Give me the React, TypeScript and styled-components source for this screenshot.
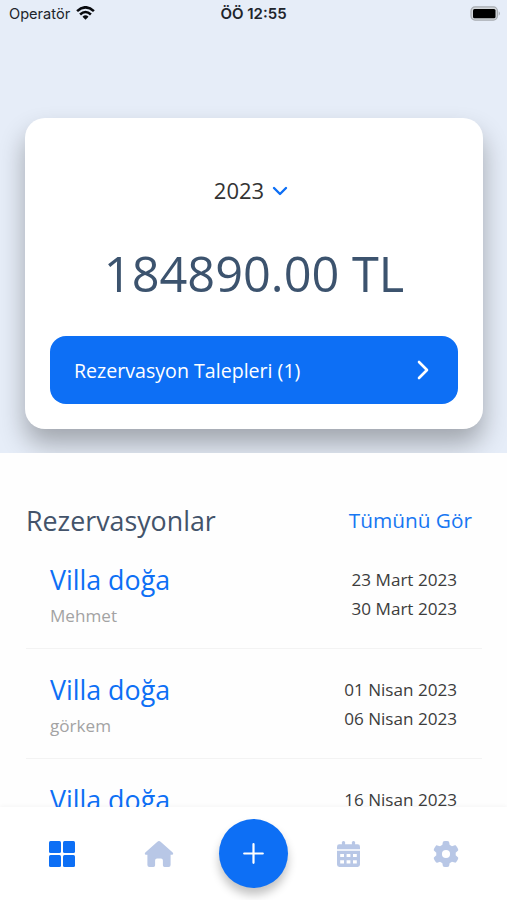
import React from "react";
import styled, { createGlobalStyle } from "styled-components";
import { FaGear } from "react-icons/fa6";

const BLUE = "#0d6ff5";

const GlobalStyle = createGlobalStyle`
  * { box-sizing: border-box; }
  body { margin: 0; background: #fff; }
`;

const Screen = styled.main`
  display: flex;
  flex-direction: column;
  width: 507px;
  height: 900px;
  overflow: hidden;
  background: #fefefe;
  font-family: "Open Sans", "Noto Sans", sans-serif;
`;

const Hero = styled.section`
  flex: none;
  height: 453px;
  overflow: hidden;
  background: #e6edf8;
`;

const StatusBar = styled.header`
  display: grid;
  grid-template-columns: 1fr auto 1fr;
  align-items: center;
  height: 28px;
  padding: 0 6px 0 9px;
  color: #20242b;
  font-family: Inter, sans-serif;
  font-size: 14.6px;
`;

const Carrier = styled.div`
  display: flex;
  align-items: center;
  gap: 6px;

  svg {
    margin-top: -2px;
  }
`;

const Clock = styled.div`
  margin: -1px 3px 0 0;
  font-weight: 600;
  font-size: 15px;
`;

const Battery = styled.svg`
  justify-self: end;
  margin-top: -2px;
`;

const Card = styled.div`
  display: flex;
  flex-direction: column;
  margin: 90px 24px 0 25px;
  height: 311px;
  padding: 53px 25px 25px;
  border-radius: 20px;
  background: #fff;
  box-shadow: 0 15px 26px rgba(0, 0, 0, 0.3);
`;

const YearPicker = styled.div`
  display: flex;
  align-items: center;
  justify-content: center;
  gap: 8px;
  height: 38px;
  padding-right: 6px;
  color: #333;
  font-size: 22px;

  svg {
    margin-top: 1px;
  }
`;

const Amount = styled.div`
  height: 78px;
  margin: 25px 0 auto;
  line-height: 78px;
  text-align: center;
  color: #3c536e;
  font-size: 48.7px;
`;

const RequestsButton = styled.button`
  display: flex;
  align-items: center;
  justify-content: space-between;
  height: 68px;
  padding: 0 29px 0 24px;
  border: 0;
  border-radius: 16px;
  background: ${BLUE};
  color: #fff;
  font-family: inherit;
  font-size: 19.6px;
`;

const Reservations = styled.section`
  flex: 1;
  min-height: 0;
  overflow: hidden;
  padding: 44px 25px 0 26px;
`;

const SectionHead = styled.div`
  display: flex;
  align-items: center;
  justify-content: space-between;
  height: 46px;
  padding-right: 10px;
`;

const SectionTitle = styled.h2`
  margin: 0;
  color: #43536a;
  font-size: 26.8px;
  font-weight: 400;
`;

const SeeAll = styled.a`
  color: #1877f2;
  font-size: 20.8px;
`;

const Row = styled.article`
  display: flex;
  justify-content: space-between;
  height: 110px;
  padding: 21px 25px 0 24px;
  border-bottom: 1px solid #f3f3f3;

  &:first-of-type {
    margin-top: -4px;
  }
`;

const Villa = styled.div`
  color: ${BLUE};
  font-size: 26.8px;
  line-height: 40px;
`;

const Guest = styled.div`
  margin-top: 2px;
  color: #a3a3a3;
  font-size: 17.1px;
  line-height: 28px;
`;

const Dates = styled.div`
  padding-top: 5px;
  text-align: right;
  color: #3c3c3c;
  font-size: 17.1px;
  line-height: 29.4px;
`;

const TabBar = styled.nav`
  flex: none;
  display: grid;
  grid-template-columns: repeat(5, 1fr);
  align-items: center;
  justify-items: center;
  height: 93px;
  padding: 0 13px;
  background: #fff;
  box-shadow: 0 -1px 4px rgba(0, 0, 0, 0.04);
  z-index: 1;
`;

const Tab = styled.a<{ $active?: boolean; $shift?: number }>`
  display: flex;
  margin-left: ${(p) => p.$shift ?? 0}px;
  color: ${(p) => (p.$active ? BLUE : "#b8c7e6")};
`;

const AddButton = styled.button`
  display: flex;
  align-items: center;
  justify-content: center;
  width: 69px;
  height: 69px;
  padding: 0;
  border: 0;
  border-radius: 50%;
  background: ${BLUE};
  color: #fff;
  box-shadow: 0 7px 10px rgba(0, 0, 0, 0.24);
`;

const reservations = [
  { villa: "Villa doğa", guest: "Mehmet", from: "23 Mart 2023", to: "30 Mart 2023" },
  { villa: "Villa doğa", guest: "görkem", from: "01 Nisan 2023", to: "06 Nisan 2023" },
  { villa: "Villa doğa", guest: "", from: "16 Nisan 2023", to: "" },
];

export default function App() {
  return (
    <>
      <GlobalStyle />
      <Screen>
        <Hero>
          <StatusBar>
            <Carrier>
              Operatör
              <svg width="19" height="14" viewBox="0 0 19 14" fill="none" stroke="#080a0e" strokeWidth="2.6">
                <path d="M1.1 5.1Q9.5-2.5 17.9 5.1" />
                <path d="M4.1 8.5Q9.5 3.5 14.9 8.5" />
                <path d="M6.5 10.7Q9.5 8 12.5 10.7L9.5 13.8Z" fill="#080a0e" stroke="none" />
              </svg>
            </Carrier>
            <Clock>ÖÖ 12:55</Clock>
            <Battery width="31" height="15" viewBox="0 0 31 15">
              <rect x="1" y="0.9" width="26.4" height="13.2" rx="4" fill="#d3d7db" stroke="#a7abb0" strokeWidth="1.2" />
              <rect x="3" y="2.9" width="22.5" height="9.3" rx="1.5" fill="#000" />
              <path d="M28.7 5.2q2.4 2.2 0 4.6z" fill="#a7abb0" />
            </Battery>
          </StatusBar>
          <Card>
            <YearPicker>
              2023
              <svg width="16" height="10" viewBox="0 0 16 10" fill="none" stroke={BLUE} strokeWidth="2.4" strokeLinecap="round" strokeLinejoin="round">
                <path d="M2 2l6 6 6-6" />
              </svg>
            </YearPicker>
            <Amount>184890.00 TL</Amount>
            <RequestsButton>
              Rezervasyon Talepleri (1)
              <svg width="12" height="20" viewBox="0 0 12 20" fill="none" stroke="#fff" strokeWidth="2.6" strokeLinecap="round" strokeLinejoin="round">
                <path d="M2 2l8 8-8 8" />
              </svg>
            </RequestsButton>
          </Card>
        </Hero>
        <Reservations>
          <SectionHead>
            <SectionTitle>Rezervasyonlar</SectionTitle>
            <SeeAll>Tümünü Gör</SeeAll>
          </SectionHead>
          {reservations.map((r) => (
            <Row key={r.from}>
              <div>
                <Villa>{r.villa}</Villa>
                <Guest>{r.guest}</Guest>
              </div>
              <Dates>
                <div>{r.from}</div>
                <div>{r.to}</div>
              </Dates>
            </Row>
          ))}
        </Reservations>
        <TabBar>
          <Tab $active $shift={1}>
            <svg width="26" height="26" viewBox="0 0 26 26" fill="currentColor">
              <rect x="0" y="0" width="12" height="12" rx="1.5" />
              <rect x="14" y="0" width="12" height="12" rx="1.5" />
              <rect x="0" y="14" width="12" height="12" rx="1.5" />
              <rect x="14" y="14" width="12" height="12" rx="1.5" />
            </svg>
          </Tab>
          <Tab $shift={3}>
            <svg width="30" height="26" viewBox="0 0 30 26" fill="currentColor">
              <path d="M13.4.7Q15-.5 16.6.7L28.7 11.6Q30 13.6 28 13.7H26.6V24Q26.6 26 24.6 26H20.5Q18.9 26 18.9 24.2V19.5Q18.9 17.6 17 17.6H13Q11.1 17.6 11.1 19.5V24.2Q11.1 26 9.5 26H5.4Q3.4 26 3.4 24V13.7H2Q0 13.6 1.3 11.6Z" />
            </svg>
          </Tab>
          <AddButton>
            <svg width="21" height="21" viewBox="0 0 21 21" fill="none" stroke="currentColor" strokeWidth="2.2" strokeLinecap="round">
              <path d="M10.5 1.2v18.6M1.2 10.5h18.6" />
            </svg>
          </AddButton>
          <Tab $shift={-2}>
            <svg width="23" height="26" viewBox="0 0 23 26" fill="currentColor">
              <rect x="4.9" y="0" width="3.2" height="6" rx="1.5" />
              <rect x="14.9" y="0" width="3.2" height="6" rx="1.5" />
              <path d="M2.4 3.3H20.6Q23 3.3 23 5.7V8.2H0V5.7Q0 3.3 2.4 3.3Z" />
              <path
                fillRule="evenodd"
                d="M0 9.8H23V23.6Q23 26 20.6 26H2.4Q0 26 0 23.6ZM3.2 12.9V16.1H7V12.9ZM9.6 12.9V16.1H13.4V12.9ZM16 12.9V16.1H19.8V12.9ZM3.2 19.2V22.4H7V19.2ZM9.6 19.2V22.4H13.4V19.2ZM16 19.2V22.4H19.8V19.2Z"
              />
            </svg>
          </Tab>
          <Tab><FaGear size={26} /></Tab>
        </TabBar>
      </Screen>
    </>
  );
}
